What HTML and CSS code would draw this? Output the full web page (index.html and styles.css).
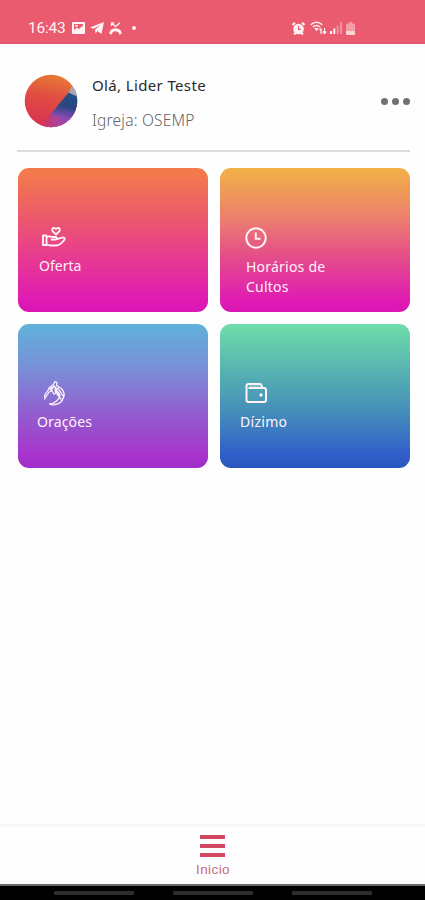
FILE: index.html
```
<!DOCTYPE html>
<html lang="pt-BR">
<head>
<meta charset="utf-8">
<meta name="viewport" content="width=device-width, initial-scale=1">
<title>Início</title>
<link rel="stylesheet" href="styles.css">
</head>
<body>
<div class="app">
  <div class="status">
    <div class="status-left">
      <span class="time">16:43</span>
      <svg class="i-photo" width="13" height="12" viewBox="0 0 13 12"><path fill="currentColor" fill-rule="evenodd" d="M1 0h11q1 0 1 1v10q0 1-1 1H1q-1 0-1-1V1q0-1 1-1zM2 2v6l3-2.500 2 1.500 4-3.500V2zM3 3h3v1.500H3z"/></svg>
      <svg class="i-send" width="14" height="12" viewBox="0 0 14 12"><path fill="currentColor" d="M14 0 11.500 12 7.500 9 5.500 11.500 5 7.500 10.500 3 3.500 6.800 0 5.600z"/></svg>
      <svg class="i-missed" width="13" height="13" viewBox="0 0 13 13" fill="none" stroke="currentColor"><path stroke-width="1.300" d="M3 1l3.500 3.500L11 .8M2.500 4V1H5"/><path stroke-width="2.800" d="M1.200 12 2.800 9q3.700-2.500 7.400 0l1.600 3"/></svg>
      <span class="dot"></span>
    </div>
    <div class="status-right">
      <svg width="13" height="13" viewBox="0 0 13 13"><path stroke="currentColor" stroke-width="2" d="M.5 3 3 .8M12.500 3 10 .8M2 12.500l2-2M11 12.500l-2-2"/><circle cx="6.500" cy="7" r="5.300" fill="currentColor"/><path d="M6.500 4v3.300H9" fill="none" stroke="#ea5b70" stroke-width="1.200"/></svg>
      <svg class="i-wifi" width="17" height="14" viewBox="0 0 17 14" fill="none" stroke="currentColor"><path stroke-width="1.500" d="M.7 3.800q5.800-5 11.600 0M2.800 6q3.700-3 7.400 0"/><path fill="currentColor" stroke="none" d="M4.200 7.500q2.300-1.500 4.600 0L6.500 10z"/><path stroke-width="1.200" d="M11 13V7.500M9.500 9 11 7.500M14.500 7v5.500M12.800 10.500l1.700 2 1.700-2"/></svg>
      <svg class="i-signal" width="12" height="12" viewBox="0 0 12 12" fill="currentColor"><path d="M0 9h2v3H0zM3.300 6.500h2V12h-2z"/><path opacity=".35" d="M6.700 3.500h2V12h-2zM10 0h2v12h-2z"/></svg>
      <svg class="i-battery" width="9" height="13" viewBox="0 0 9 13" fill="currentColor"><path opacity=".55" d="M3 0h3v1.500h2Q9 2 9 3v6H0V3q0-1 1-1.500h2z"/><path d="M0 9h9v3q0 1-1 1H1q-1 0-1-1z"/></svg>
    </div>
  </div>

  <header class="profile">
    <svg class="avatar" width="54" height="54" viewBox="0 0 54 54">
      <defs>
        <linearGradient id="warm" x1=".6" y1="0" x2=".4" y2="1"><stop offset="0" stop-color="#e77c35"/><stop offset=".45" stop-color="#e04c42"/><stop offset="1" stop-color="#d93152"/></linearGradient>
        <linearGradient id="cool" x1=".6" y1="0" x2=".45" y2="1"><stop offset="0" stop-color="#24568a"/><stop offset=".45" stop-color="#294680"/><stop offset=".75" stop-color="#8a4cb3"/><stop offset="1" stop-color="#b13e91"/></linearGradient>
        <linearGradient id="base" x1="0" y1="0" x2="1" y2="0"><stop offset="0" stop-color="#d93152"/><stop offset="1" stop-color="#9a4bb4"/></linearGradient>
        <clipPath id="round"><circle cx="27" cy="27" r="26.300"/></clipPath>
      </defs>
      <g clip-path="url(#round)">
        <path fill="url(#warm)" d="M0 0h54v54H0z"/>
        <path fill="url(#base)" d="M26 41 40 36v18H16z"/>
        <path fill="url(#cool)" d="M54 14 45 18 26 41l10 2 2 11h16z"/>
        <path fill="#a9a5b7" d="M48 12 44.500 18.500 54 23V12z"/>
      </g>
    </svg>
    <div class="who">
      <div class="name">Olá, Lider Teste</div>
      <div class="church">Igreja: OSEMP</div>
    </div>
    <div class="more"><i></i><i></i><i></i></div>
  </header>

  <main class="cards">
    <section class="card oferta">
      <svg width="26" height="22" viewBox="0 0 26 22" fill="none" stroke="currentColor" stroke-width="1.800" stroke-linejoin="round" stroke-linecap="round"><path d="M15 8.500 11.500 5Q10.500 2 13 1.800q1.300 0 2 1.200.7-1.200 2-1.200 2.500.2 1.500 3.200z"/><path d="M2 9.500h3.500v9.500H2zM5.500 11.500Q8 9.500 11 11h4q2 1.300 0 2.500h-4.500M16 13.200l5.500-1.700q3 0 2 2.300Q20 18.500 16 19.500H9l-3.500-1.200"/></svg>
      <div class="label">Oferta</div>
    </section>
    <section class="card horarios">
      <svg width="22" height="22" viewBox="0 0 22 22" fill="none" stroke="currentColor" stroke-width="2"><circle cx="11" cy="11" r="9.700"/><path d="M10.800 5.500v6.300h4.700"/></svg>
      <div class="label">Horários de<br>Cultos</div>
    </section>
    <section class="card oracoes">
      <svg width="24" height="26" viewBox="0 0 24 26" fill="none" stroke="currentColor" stroke-width="1.300" stroke-linecap="round" stroke-linejoin="round"><path d="M2 19Q1 15 3 13M4 12l3-5 3-2 2-3.500 2 1-.5 3 5 3q4 5 2 9-2 6-8 7-3 1-6-.5 4 0 7-3 4-3 3-7L12 8M3 17l3-5 3-1 2 3 2-1-1-3 5 6M6 8l2 2 3-4 3 3M15 8l5 8M8 7l1 4M14 14l4 5M21 13v3"/></svg>
      <div class="label">Orações</div>
    </section>
    <section class="card dizimo">
      <svg width="23" height="22" viewBox="0 0 23 22" fill="none" stroke="currentColor" stroke-width="2" stroke-linejoin="round"><path d="M17.500 6 16 2.500Q15.500 2 15 2H3.500Q1.500 2 1.500 4v14q0 2 2 2H19q2 0 2-2V8q0-2-2-2H3.500"/><path stroke-width="1" opacity=".6" d="M4 4h11"/><circle cx="16" cy="13" r="1.700" fill="currentColor" stroke="none"/></svg>
      <div class="label">Dízimo</div>
    </section>
  </main>

  <footer class="tabs">
    <div class="burger"><i></i><i></i><i></i></div>
    <div class="tab-label">Inicio</div>
  </footer>
  <div class="system"><i></i><i></i><i></i></div>
</div>
</body>
</html>
```
FILE: styles.css
```
* { box-sizing: border-box; }
body { margin: 0; background: #fff; font-family: "Noto Sans", "Open Sans", sans-serif; }
svg { display: block; flex: none; }
.app { width: 425px; height: 900px; display: flex; flex-direction: column; overflow: hidden; background: #fefefe; }

.status { height: 44px; flex: none; background: #ea5b70; border-bottom: 1px solid #dd566a; color: #fff3f4; display: flex; justify-content: space-between; padding: 18px 70px 0 28px; }
.status-left, .status-right { display: flex; align-items: center; height: 20px; }
.time { font: 15.500px/20px Roboto, sans-serif; width: 38px; letter-spacing: -.2px; }
.i-photo { margin-left: 6px; }
.i-send { margin-left: 5px; }
.i-missed { margin-left: 5px; }
.dot { width: 4px; height: 4px; border-radius: 50%; background: currentColor; margin-left: 10px; }
.i-wifi { margin-left: 5px; }
.i-signal { margin-left: 3px; }
.i-battery { margin-left: 4px; color: #fbd3d5; }

.profile { height: 108px; flex: none; margin: 0 15px 0 17px; padding: 30px 0 0 7px; display: flex; align-items: flex-start; border-bottom: 2px solid #dbdbdb; }
.who { margin: -1px 0 0 14px; }
.name { font-size: 15px; line-height: 24px; color: #292929; letter-spacing: .36px; }
.church { font-size: 15.500px; line-height: 24px; color: #626262; margin-top: 11px; font-weight: 300; letter-spacing: .22px; }
.more { margin-left: auto; display: flex; gap: 4px; padding-top: 24px; }
.more i { width: 7px; height: 7px; border-radius: 50%; background: #717171; }

.cards { display: grid; grid-template-columns: 190px 190px; grid-template-rows: 144px 144px; gap: 12px; padding: 16px 0 0 18px; }
.card { border-radius: 11px; color: #fff3f8; padding: 58px 0 0 22px; }
.label { font-size: 14px; line-height: 20px; }
.oferta { background: linear-gradient(#f37b4b 2%, #ed5e67 30%, #e83f8b 58%, #df1bb4 92%, #d915b4); }
.horarios { background: linear-gradient(#f1af48 2%, #ec7d70 36%, #e55087 60%, #df1bb4 92%, #d915b4); padding-left: 25px; }
.oracoes { background: linear-gradient(#61b0da 2%, #7890d8 30%, #925ecf 62%, #a832cc 92%, #9f2dc7); padding: 56px 0 0 23px; }
.dizimo { background: linear-gradient(#6edbab 2%, #57b3b0 32%, #448dbb 62%, #325fc9 90%, #2857bd); padding-left: 25px; }
.oferta svg { margin-left: 1px; }
.oferta .label { margin: 8px 0 0 -1px; }
.horarios svg { margin-top: 1px; }
.horarios .label { margin: 8px 0 0 1px; letter-spacing: .22px; }
.oracoes .label { margin: 6px 0 0 -4px; letter-spacing: .15px; }
.oracoes svg { margin-left: 2px; }
.dizimo .label { margin: 8px 0 0 -5px; letter-spacing: .3px; }

.tabs { margin-top: auto; height: 60px; flex: none; border-top: 2px solid #f7f7f7; display: flex; flex-direction: column; align-items: center; padding-top: 9px; }
.burger { display: flex; flex-direction: column; gap: 5px; }
.burger i { width: 25px; height: 4px; background: #d24861; }
.tab-label { font: 13.500px/17px "Liberation Sans", sans-serif; color: #c46b7c; margin-top: 4px; padding-left: 1px; letter-spacing: .4px; }
.system { height: 16px; flex: none; background: #000; border-top: 2px solid #656b68; display: flex; justify-content: center; gap: 39px; padding-top: 5px; }
.system i { width: 80px; height: 4px; border-radius: 1px; background: #2d2d2d; }
```
